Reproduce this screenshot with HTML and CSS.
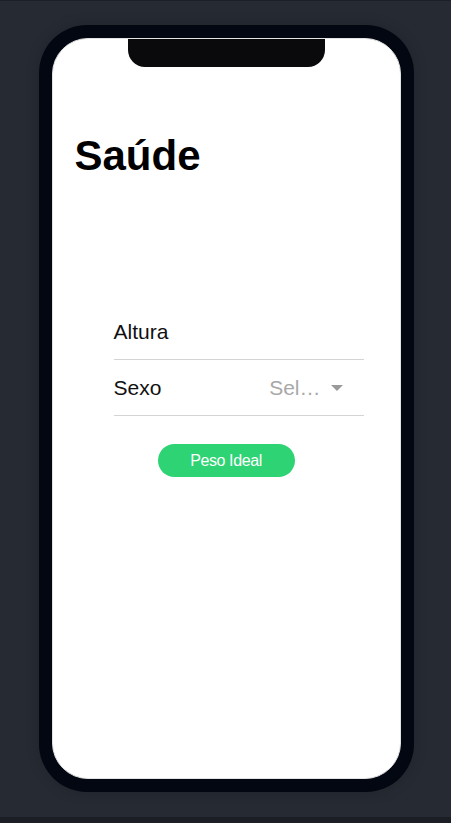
FILE: index.html
```html
<!DOCTYPE html>
<html lang="pt">
<head>
<meta charset="utf-8">
<title>Saúde</title>
<link rel="stylesheet" href="styles.css">
</head>
<body>
<div class="stage">
  <div class="phone">
    <div class="screen">
      <div class="notch"></div>
      <h1 class="title">Saúde</h1>
      <div class="form">
        <div class="row">
          <span class="label">Altura</span>
        </div>
        <div class="row">
          <span class="label">Sexo</span>
          <div class="picker">
            <span class="picker-text">Sel…</span>
            <svg class="caret" width="12" height="6" viewBox="0 0 12 6"><path d="M0 0 H12 L6 6 Z" fill="#9a9a9a"/></svg>
          </div>
        </div>
      </div>
      <button class="btn">Peso Ideal</button>
    </div>
  </div>
</div>
<div class="footer-strip"></div>
</body>
</html>
```

FILE: styles.css
```css
html, body {
  margin: 0;
  padding: 0;
}
body {
  width: 451px;
  height: 823px;
  overflow: hidden;
  background: #262b33;
  font-family: "Liberation Sans", Arial, sans-serif;
  border-top: 1px solid #1d2127;
  box-sizing: border-box;
}
.stage {
  height: 816px;
  display: flex;
  justify-content: center;
  padding-top: 24px;
  padding-left: 1px;
  box-sizing: border-box;
}
.phone {
  width: 375px;
  height: 767px;
  background: #030711;
  border-radius: 48px;
  padding: 13px;
  box-sizing: border-box;
  box-shadow: 0 0 14px rgba(0, 0, 0, 0.18);
}
.screen {
  position: relative;
  height: 100%;
  background: #ffffff;
  border-radius: 36px;
  border: 1px solid #e3e3e3;
  box-sizing: border-box;
  overflow: hidden;
  display: flex;
  flex-direction: column;
}
.notch {
  position: absolute;
  top: -1px;
  left: 75px;
  width: 197px;
  height: 29px;
  background: #0a0a0c;
  border-radius: 0 0 17px 17px;
}
.title {
  margin: 93px 0 0 22px;
  font-size: 42px;
  line-height: 48px;
  font-weight: bold;
  color: #000;
}
.form {
  margin: 124px 0 0 61px;
  width: 250px;
}
.row {
  height: 55px;
  border-bottom: 1px solid #d4d4d4;
  display: flex;
  align-items: center;
  justify-content: space-between;
}
.label {
  font-size: 21px;
  color: #111;
}
.picker {
  display: flex;
  align-items: center;
  gap: 10px;
  margin-right: 21px;
}
.picker-text {
  font-size: 21px;
  color: #a8a8a8;
}
.caret {
  display: block;
}
.btn {
  align-self: center;
  margin-top: 28px;
  width: 137px;
  height: 33px;
  border: none;
  border-radius: 17px;
  background: #2ed373;
  color: #fff;
  font-family: "Liberation Sans", Arial, sans-serif;
  font-size: 16px;
  letter-spacing: -0.4px;
  padding: 0;
}
.footer-strip {
  height: 6px;
  background: #1b1e24;
}
```
